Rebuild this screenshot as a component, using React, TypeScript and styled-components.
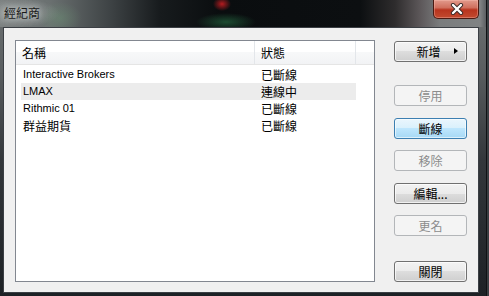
import React from 'react';
import styled, { createGlobalStyle, css } from 'styled-components';

const Global = createGlobalStyle`
  html, body { margin: 0; padding: 0; background: #111; }
  body { width: 489px; height: 296px; overflow: hidden; }
`;

const Window = styled.div`
  width: 489px;
  height: 296px;
  box-sizing: border-box;
  display: flex;
  flex-direction: column;
  padding: 0 10px 3px 3px;
  font-family: "Noto Sans CJK TC", sans-serif;
  box-shadow: inset -2px 0 0 #3a3e42, inset -3px 0 0 #101214;
  background:
    radial-gradient(ellipse 9px 7px at 222px 4px, rgba(210, 30, 35, 0.85), rgba(210, 30, 35, 0) 100%) 0 0 / 100% 27px no-repeat,
    radial-gradient(ellipse 30px 9px at 226px 22px, rgba(50, 150, 90, 0.45), rgba(50, 150, 90, 0) 100%) 0 0 / 100% 27px no-repeat,
    radial-gradient(ellipse 22px 16px at 60px 18px, rgba(110, 160, 120, 0.35), rgba(110, 160, 120, 0) 100%) 0 0 / 100% 27px no-repeat,
    radial-gradient(ellipse 40px 14px at 20px 13px, rgba(180, 185, 185, 0.55), rgba(180, 185, 185, 0) 100%) 0 0 / 100% 27px no-repeat,
    linear-gradient(to right, #7e8383 0px, #6a7070 50px, #3e4345 110px, #171b1d 160px, #0a0d0f 220px, #0c0f11 360px, #2e2c2d 395px, #5c5759 420px, #7a7c7d 440px, #808384 480px, #4a4e52 489px) 0 0 / 100% 27px no-repeat,
    linear-gradient(to bottom, #6f7374 0px, #5a5e60 70px, #33373b 160px, #1d2125 296px);
`;

const TitleBar = styled.div`
  height: 27px;
  flex: none;
  display: flex;
  align-items: flex-start;
`;

const Title = styled.span`
  margin: 5px 0 0 1px;
  font-size: 12px;
  line-height: 16px;
  color: #1a1a1a;
  text-shadow: 0 0 6px rgba(215, 220, 220, 0.9), 0 0 10px rgba(200, 205, 205, 0.6);
`;

const CloseButton = styled.div`
  margin-left: auto;
  width: 46px;
  height: 19px;
  box-sizing: border-box;
  border: 1px solid #4b1a12;
  border-top: none;
  border-radius: 0 0 5px 5px;
  background: linear-gradient(to bottom, #e29a8c 0%, #d0705e 42%, #b8341e 55%, #c24a2f 100%);
  box-shadow: inset 0 0 0 1px rgba(255, 200, 190, 0.35);
  display: flex;
  align-items: center;
  justify-content: center;
  padding-left: 2px;
`;

const Client = styled.div`
  flex: 1;
  display: flex;
  background: #f0f0f0;
  border: 1px solid #3b3f44;
  padding: 12px 11px 10px 11px;
  gap: 19px;
`;

const ListBox = styled.div`
  width: 360px;
  box-sizing: border-box;
  border: 1px solid #828790;
  background: #ffffff;
  display: flex;
  flex-direction: column;
`;

const Header = styled.div`
  height: 24px;
  box-sizing: border-box;
  display: flex;
  border-bottom: 1px solid #e5e5e5;
  background: linear-gradient(to bottom, #ffffff 0%, #ffffff 50%, #f7f8f9 50%, #f2f3f5 100%);
`;

const HeaderCell = styled.div<{ $w?: number }>`
  ${(p) => (p.$w ? css`width: ${p.$w}px;` : css`flex: 1;`)}
  box-sizing: border-box;
  padding-left: 6px;
  display: flex;
  align-items: center;
  font-size: 12px;
  color: #000;
  border-right: ${(p) => (p.$w ? '1px solid #e3e6ea' : 'none')};
`;

const Rows = styled.div`
  padding-top: 1px;
  display: flex;
  flex-direction: column;
`;

const Row = styled.div<{ $selected?: boolean }>`
  margin-left: 5px;
  width: 335px;
  height: 17px;
  display: grid;
  grid-template-columns: 238px 97px;
  align-items: center;
  background: ${(p) => (p.$selected ? '#ececec' : 'transparent')};
`;

const Cell = styled.div<{ $cjk?: boolean }>`
  padding-left: 2px;
  white-space: nowrap;
  color: #000;
  ${(p) =>
    p.$cjk
      ? css`font: 12px/17px "Noto Sans CJK TC", sans-serif;`
      : css`font: 11px/17px "Liberation Sans", "Noto Sans CJK TC", sans-serif;`}
`;

const ButtonColumn = styled.div`
  width: 73px;
  display: flex;
  flex-direction: column;
`;

type Variant = 'normal' | 'disabled' | 'hot';

const Btn = styled.div<{ $variant: Variant; $mt: number }>`
  position: relative;
  margin-top: ${(p) => p.$mt}px;
  width: 73px;
  height: 21px;
  box-sizing: border-box;
  border-radius: 3px;
  display: flex;
  align-items: center;
  justify-content: center;
  font-size: 12px;
  line-height: 16px;
  ${(p) =>
    p.$variant === 'disabled'
      ? css`
          border: 1px solid #b3b6b9;
          background: #f4f4f4;
          color: #8c8c8c;
        `
      : p.$variant === 'hot'
      ? css`
          border: 1px solid #3c7fb1;
          background: linear-gradient(to bottom, #eaf6fd 0%, #d9f0fc 50%, #bee6fd 50%, #a7d9f5 100%);
          box-shadow: inset 0 0 0 1px rgba(255, 255, 255, 0.6);
          color: #000;
        `
      : css`
          border: 1px solid #707070;
          background: linear-gradient(to bottom, #f2f2f2 0%, #ebebeb 50%, #dddddd 50%, #cfcfcf 100%);
          box-shadow: inset 0 0 0 1px rgba(255, 255, 255, 0.7);
          color: #000;
        `}
`;

const BtnLabel = styled.span<{ $shift?: number }>`
  margin-right: ${(p) => p.$shift ?? 0}px;
`;

const MenuArrow = styled.span`
  position: absolute;
  right: 8px;
  top: 6px;
  width: 0;
  height: 0;
  border-left: 4px solid #000;
  border-top: 3.5px solid transparent;
  border-bottom: 3.5px solid transparent;
`;

const rows = [
  { name: 'Interactive Brokers', status: '已斷線', cjk: false },
  { name: 'LMAX', status: '連線中', cjk: false, selected: true },
  { name: 'Rithmic 01', status: '已斷線', cjk: false },
  { name: '群益期貨', status: '已斷線', cjk: true },
];

const buttons: { label: string; variant: Variant; mt: number; arrow?: boolean }[] = [
  { label: '新增', variant: 'normal', mt: 1, arrow: true },
  { label: '停用', variant: 'disabled', mt: 23 },
  { label: '斷線', variant: 'hot', mt: 12 },
  { label: '移除', variant: 'disabled', mt: 11 },
  { label: '編輯...', variant: 'normal', mt: 12 },
  { label: '更名', variant: 'disabled', mt: 11 },
  { label: '關閉', variant: 'normal', mt: 25 },
];

export default function App() {
  return (
    <>
      <Global />
      <Window>
        <TitleBar>
          <Title>經紀商</Title>
          <CloseButton>
            <svg width="14" height="12" viewBox="0 0 14 12">
              <path d="M3 2 L11 10 M11 2 L3 10" stroke="#3a2a28" strokeWidth="4.2" strokeLinecap="round" fill="none" />
              <path d="M3 2 L11 10 M11 2 L3 10" stroke="#ffffff" strokeWidth="2.4" strokeLinecap="round" fill="none" />
            </svg>
          </CloseButton>
        </TitleBar>
        <Client>
          <ListBox>
            <Header>
              <HeaderCell $w={239}>名稱</HeaderCell>
              <HeaderCell $w={101}>狀態</HeaderCell>
              <HeaderCell />
            </Header>
            <Rows>
              {rows.map((r) => (
                <Row key={r.name} $selected={r.selected}>
                  <Cell $cjk={r.cjk}>{r.name}</Cell>
                  <Cell $cjk>{r.status}</Cell>
                </Row>
              ))}
            </Rows>
          </ListBox>
          <ButtonColumn>
            {buttons.map((b) => (
              <Btn key={b.label} $variant={b.variant} $mt={b.mt}>
                <BtnLabel $shift={b.arrow ? 4 : 0}>{b.label}</BtnLabel>
                {b.arrow && <MenuArrow />}
              </Btn>
            ))}
          </ButtonColumn>
        </Client>
      </Window>
    </>
  );
}
